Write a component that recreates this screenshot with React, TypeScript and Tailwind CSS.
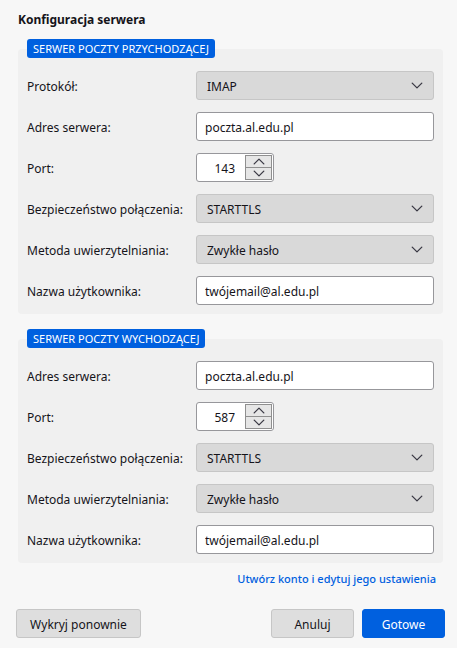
import { useState, type ReactNode } from "react"

const controlBase = "h-[29px] w-full rounded-[3px] border pt-0.5 text-[12px] text-[#15141a]"

function Chevron({ up = false, className = "" }: { up?: boolean; className?: string }) {
  return (
    <svg
      width="12"
      height="7"
      viewBox="0 0 12 7"
      fill="none"
      stroke="#3a3944"
      strokeWidth="1.3"
      strokeLinecap="round"
      strokeLinejoin="round"
      aria-hidden="true"
      className={className}
    >
      <path d={up ? "M1.2 5.9L6 1.1L10.8 5.9" : "M1.2 1.1L6 5.9L10.8 1.1"} />
    </svg>
  )
}

function Row({ id, label, children }: { id: string; label: string; children: ReactNode }) {
  return (
    <div className="grid grid-cols-[169px_1fr] items-center">
      <label htmlFor={id} className="pt-0.5 whitespace-nowrap">
        {label}
      </label>
      {children}
    </div>
  )
}

interface FieldProps {
  id: string
  label: string
  initial: string
}

function TextRow({ id, label, initial }: FieldProps) {
  const [value, setValue] = useState(initial)
  return (
    <Row id={id} label={label}>
      <input
        id={id}
        type="text"
        value={value}
        onChange={(e) => setValue(e.target.value)}
        className={`${controlBase} border-[#97979b] bg-white px-2`}
      />
    </Row>
  )
}

function SelectRow({ id, label, initial, options }: FieldProps & { options: string[] }) {
  const [value, setValue] = useState(initial)
  return (
    <Row id={id} label={label}>
      <div className="relative">
        <select
          id={id}
          value={value}
          onChange={(e) => setValue(e.target.value)}
          className={`${controlBase} appearance-none border-[#c6c6c6] bg-[#d9d9d9] pr-8 pl-[10px]`}
        >
          {options.map((option) => (
            <option key={option}>{option}</option>
          ))}
        </select>
        <Chevron className="pointer-events-none absolute top-[11px] right-[11px]" />
      </div>
    </Row>
  )
}

function PortRow({ id, initial }: { id: string; initial: number }) {
  const [port, setPort] = useState(initial)
  const step = "flex flex-1 items-center justify-center border border-[#8f8f8f] bg-[#e6e6e6]"
  return (
    <Row id={id} label="Port:">
      <div className="flex h-[29px] w-[78px] rounded-[3px] border border-[#97979b] bg-white p-px">
        <input
          id={id}
          type="text"
          inputMode="numeric"
          value={port}
          onChange={(e) => setPort(Number(e.target.value) || 0)}
          className="min-w-0 flex-1 pt-0.5 pr-[10px] text-right text-[12px]"
        />
        <div className="flex w-[27px] flex-col">
          <button type="button" aria-label="Zwiększ" onClick={() => setPort(port + 1)} className={step}>
            <Chevron up />
          </button>
          <button type="button" aria-label="Zmniejsz" onClick={() => setPort(port - 1)} className={`${step} border-t-0`}>
            <Chevron />
          </button>
        </div>
      </div>
    </Row>
  )
}

function ServerSection({ title, children }: { title: string; children: ReactNode }) {
  return (
    <fieldset className="min-w-0 rounded-[4px] bg-[#f0f0f0] px-[9px] pt-[13px] pb-[9px]">
      <legend className="rounded-[3px] bg-[#0060df] px-[6px] text-[11px] leading-[19px] text-white">
        {title}
      </legend>
      <div className="flex flex-col gap-3">{children}</div>
    </fieldset>
  )
}

// Security, authentication and login are the same for both servers
function AccountRows({ prefix }: { prefix: string }) {
  return (
    <>
      <SelectRow
        id={`${prefix}-security`}
        label="Bezpieczeństwo połączenia:"
        initial="STARTTLS"
        options={["STARTTLS", "SSL/TLS"]}
      />
      <SelectRow
        id={`${prefix}-auth`}
        label="Metoda uwierzytelniania:"
        initial="Zwykłe hasło"
        options={["Zwykłe hasło", "Zaszyfrowane hasło"]}
      />
      <TextRow id={`${prefix}-user`} label="Nazwa użytkownika:" initial="twójemail@al.edu.pl" />
    </>
  )
}

export default function App() {
  const button = "h-[29px] rounded-[3px] border pt-0.5 text-[12px]"
  return (
    <main className="min-h-screen bg-[#f7f7f7] pt-[11px] pb-[10px] font-['Noto_Sans',sans-serif] text-[12px] leading-[18px] text-[#15141a]">
      <form onSubmit={(e) => e.preventDefault()}>
        <div className="pr-[14px] pl-[18px]">
          <h1 className="mb-[10px] text-[12px] font-bold">Konfiguracja serwera</h1>
          <div className="flex flex-col gap-[15px]">
            <ServerSection title="SERWER POCZTY PRZYCHODZĄCEJ">
              <SelectRow id="in-protocol" label="Protokół:" initial="IMAP" options={["IMAP", "POP3"]} />
              <TextRow id="in-host" label="Adres serwera:" initial="poczta.al.edu.pl" />
              <PortRow id="in-port" initial={143} />
              <AccountRows prefix="in" />
            </ServerSection>
            <ServerSection title="SERWER POCZTY WYCHODZĄCEJ">
              <TextRow id="out-host" label="Adres serwera:" initial="poczta.al.edu.pl" />
              <PortRow id="out-port" initial={587} />
              <AccountRows prefix="out" />
            </ServerSection>
          </div>
          <div className="mt-[7px] pr-[7px] text-right">
            <a href="#settings" className="text-[11px] font-medium text-[#0060df]">
              Utwórz konto i edytuj jego ustawienia
            </a>
          </div>
        </div>
        <div className="mt-[21px] flex gap-2 pr-3 pl-4">
          <button type="button" className={`${button} mr-auto w-[125px] border-[#c6c6c6] bg-[#dedede]`}>
            Wykryj ponownie
          </button>
          <button type="button" className={`${button} w-[83px] border-[#c6c6c6] bg-[#dedede]`}>
            Anuluj
          </button>
          <button type="submit" className={`${button} w-[83px] border-[#0060df] bg-[#0060df] text-white`}>
            Gotowe
          </button>
        </div>
      </form>
    </main>
  )
}
